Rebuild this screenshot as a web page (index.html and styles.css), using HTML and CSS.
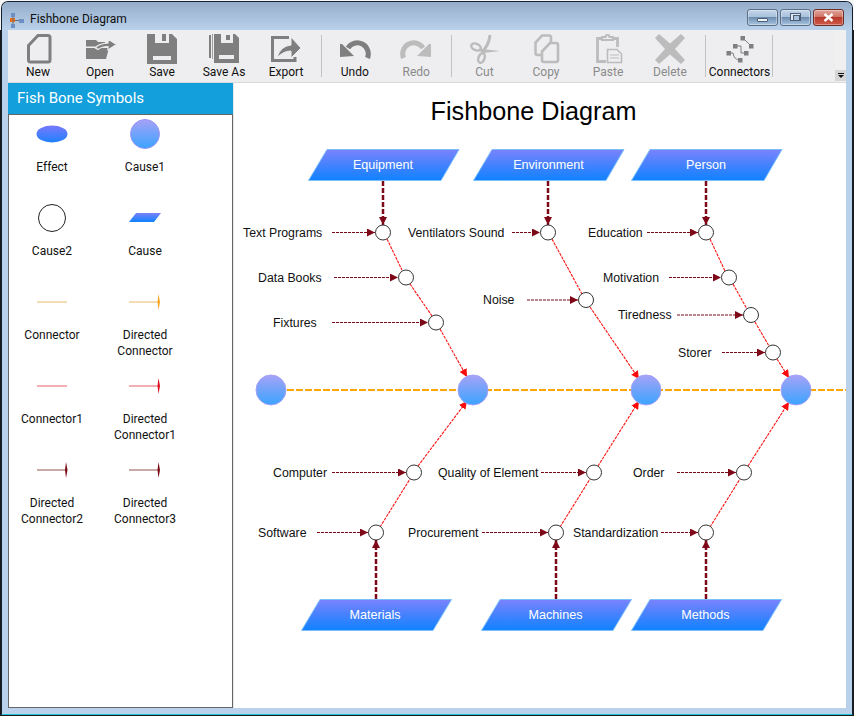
FILE: index.html
```html
<!DOCTYPE html>
<html lang="en">
<head>
<meta charset="utf-8">
<title>Fishbone Diagram</title>
<link rel="stylesheet" href="styles.css">
</head>
<body>
<div class="window">
  <header class="titlebar">
    <svg class="app-icon" viewBox="0 0 15 15" width="15" height="15">
      <rect x="1" y="0" width="4" height="4" fill="#6d8fc4"/>
      <rect x="0" y="5" width="5" height="4" fill="#e8701a"/>
      <rect x="1" y="11" width="4" height="4" fill="#6d8fc4"/>
      <rect x="9" y="6" width="5" height="4" fill="#6d8fc4"/>
      <path d="M3 4V11M5 7.5H9" stroke="#6b6b6b" stroke-width="1" fill="none"/>
    </svg>
    <span class="title">Fishbone Diagram</span>
    <div class="controls">
      <div class="ctl"><span class="min-glyph"></span></div>
      <div class="ctl"><span class="max-glyph"></span></div>
      <div class="ctl close">
        <svg viewBox="0 0 11 9" width="11" height="9"><path d="M1.5 1L9.5 8M9.5 1L1.5 8" stroke="#fff" stroke-width="2.4" fill="none"/></svg>
      </div>
    </div>
  </header>
  <div class="client">
    <nav class="toolbar">
      <div class="tools">
        <div class="tool first">
          <svg class="ic" viewBox="0 0 30 30"><path d="M5.500 11.500L15 1.500H25a2 2 0 0 1 2 2V26a2 2 0 0 1-2 2H7.500a2 2 0 0 1-2-2Z" fill="none" stroke="#7f7f7f" stroke-width="3"/></svg>
          <span>New</span>
        </div>
        <div class="tool">
          <svg class="ic" viewBox="0 0 30 30"><path d="M1 6H11L13 8H20V9.500Q13 10 10.500 12.500H1ZM1 14H24L21 25H1Z" fill="#7f7f7f"/><path d="M10.500 14Q14 9.500 23 9V5L31.500 10.500L23 16V12.500Q17 12.500 13 15.500Z" fill="#7f7f7f" stroke="#eeeef0" stroke-width="1.200"/></svg>
          <span>Open</span>
        </div>
        <div class="tool">
          <svg class="ic" viewBox="0 0 30 30"><path d="M0 0H8V9H22V0H25L30 5V30H0Z" fill="#7f7f7f"/><rect x="15" y="0" width="4" height="7" fill="#7f7f7f"/><rect x="6" y="22" width="18" height="4" fill="#eeeef0"/></svg>
          <span>Save</span>
        </div>
        <div class="tool">
          <svg class="ic" viewBox="0 0 30 30"><path d="M5 0H12V9H24V0H26L30 4V29H5Z" fill="#7f7f7f"/><rect x="17" y="1" width="4" height="5" fill="#7f7f7f"/><rect x="10" y="21" width="15" height="4" fill="#eeeef0"/><rect x="0" y="1" width="2" height="23" fill="#7f7f7f"/><rect x="3" y="0" width="1" height="25" fill="#a0a0a0"/></svg>
          <span>Save As</span>
        </div>
        <div class="tool">
          <svg class="ic" viewBox="0 0 30 30"><path d="M18 3.500H1.500V26.500H24V23" fill="none" stroke="#7f7f7f" stroke-width="3"/><path d="M6 24Q9 12 20 11V3L30 14L20 24V17Q12 17 6 24Z" fill="#7f7f7f" stroke="#eeeef0" stroke-width="1"/></svg>
          <span>Export</span>
        </div>
        <div class="sep"></div>
        <div class="tool step">
          <svg class="ic" viewBox="0 0 30 30"><path d="M27.500 24A11 11 0 0 0 8 14" fill="none" stroke="#7f7f7f" stroke-width="5"/><path d="M0 10H2L14 22L0 23Z" fill="#7f7f7f"/></svg>
          <span>Undo</span>
        </div>
        <div class="tool step off">
          <svg class="ic" viewBox="0 0 30 30"><path d="M2.500 24A11 11 0 0 1 22 14" fill="none" stroke="#bcbcbc" stroke-width="5"/><path d="M30 10H28L16 22L30 23Z" fill="#bcbcbc"/></svg>
          <span>Redo</span>
        </div>
        <div class="sep"></div>
        <div class="tool mid off">
          <svg class="ic" viewBox="0 0 30 30"><path d="M20 1Q19 11 12 18" fill="none" stroke="#bcbcbc" stroke-width="3"/><path d="M12 15L30 17L14 19Z" fill="#bcbcbc"/><ellipse cx="6" cy="13" rx="5" ry="3.200" transform="rotate(25 6 13)" fill="none" stroke="#bcbcbc" stroke-width="2.500"/><ellipse cx="11.500" cy="24" rx="3" ry="5" transform="rotate(20 11.500 24)" fill="none" stroke="#bcbcbc" stroke-width="2.500"/><path d="M10 15L13.500 19" stroke="#bcbcbc" stroke-width="2.500"/></svg>
          <span>Cut</span>
        </div>
        <div class="tool off">
          <svg class="ic" viewBox="0 0 30 30"><path d="M12 21H6.500a2 2 0 0 1-2-2V8.500L11 1.500H18a2 2 0 0 1 2 2V8" fill="none" stroke="#bcbcbc" stroke-width="2.600"/><path d="M11 17.500L19 9H25a2 2 0 0 1 2 2V26a2 2 0 0 1-2 2H13a2 2 0 0 1-2-2Z" fill="none" stroke="#bcbcbc" stroke-width="2.600"/></svg>
          <span>Copy</span>
        </div>
        <div class="tool off">
          <svg class="ic" viewBox="0 0 30 30"><path d="M9 4.500H4.500V27.500H13M20 4.500H24.500V13" fill="none" stroke="#bcbcbc" stroke-width="2.800"/><path d="M9 6V3H12.500a2 2 0 0 1 4 0H20V6Z" fill="none" stroke="#bcbcbc" stroke-width="2"/><path d="M14.500 28.500V15.500H24L28.500 20V28.500Z" fill="none" stroke="#bcbcbc" stroke-width="1.600"/><path d="M17 21H26M17 24H26" stroke="#bcbcbc" stroke-width="1.200"/></svg>
          <span>Paste</span>
        </div>
        <div class="tool off">
          <svg class="ic" viewBox="0 0 30 30"><path d="M4 0L15 9.500L26 0L30 4L20 15L30 26L26 30L15 20.500L4 30L0 26L10 15L0 4Z" fill="#bcbcbc"/></svg>
          <span>Delete</span>
        </div>
        <div class="sep"></div>
        <div class="tool wide">
          <svg class="ic" viewBox="0 0 30 30"><path d="M18 4L26 12M10 12H16V19H21M4 19H8Q9 26 15 26" fill="none" stroke="#7f7f7f" stroke-width="1"/><rect x="15.500" y="2" width="4.500" height="4.500" fill="#7f7f7f"/><rect x="24" y="10" width="4.500" height="4.500" fill="#7f7f7f"/><rect x="8" y="10" width="4.500" height="4.500" fill="#7f7f7f"/><rect x="19" y="17" width="4.500" height="4.500" fill="#7f7f7f"/><rect x="1.500" y="17" width="4.500" height="4.500" fill="#7f7f7f"/><rect x="13" y="24" width="4.500" height="4.500" fill="#7f7f7f"/></svg>
          <span>Connectors</span>
        </div>
        <div class="sep last"></div>
      </div>
      <div class="overflow"><span class="of-bar"></span><span class="of-arrow"></span></div>
    </nav>
    <div class="main">
      <aside class="panel">
        <h2 class="panel-head">Fish Bone Symbols</h2>
        <div class="symbols">
          <div class="sym">
            <div class="sym-ic"><svg viewBox="0 0 32 36" width="32" height="36"><ellipse cx="16" cy="18" rx="15.500" ry="8.500" fill="url(#gBlue)"/></svg></div>
            <div class="sym-lb">Effect</div>
          </div>
          <div class="sym">
            <div class="sym-ic"><svg viewBox="0 0 32 36" width="32" height="36"><circle cx="16" cy="18" r="14.500" fill="url(#gCause)" stroke="#9a96f5" stroke-width="1"/></svg></div>
            <div class="sym-lb">Cause1</div>
          </div>
          <div class="sym">
            <div class="sym-ic"><svg viewBox="0 0 32 36" width="32" height="36"><circle cx="16" cy="18" r="13.500" fill="#fff" stroke="#222" stroke-width="1"/></svg></div>
            <div class="sym-lb">Cause2</div>
          </div>
          <div class="sym">
            <div class="sym-ic"><svg viewBox="0 0 32 36" width="32" height="36"><path d="M7 13H32L25 22H0Z" fill="url(#gPara)"/></svg></div>
            <div class="sym-lb">Cause</div>
          </div>
          <div class="sym">
            <div class="sym-ic"><svg viewBox="0 0 32 36" width="32" height="36"><path d="M1 18H31" stroke="#f3dcb4" stroke-width="2"/></svg></div>
            <div class="sym-lb">Connector</div>
          </div>
          <div class="sym">
            <div class="sym-ic"><svg viewBox="0 0 32 36" width="32" height="36"><path d="M0 18H30" stroke="#f3dcb4" stroke-width="2"/><path d="M29.500 10L31 18L29.500 26L28.500 18Z" fill="#f5a623"/></svg></div>
            <div class="sym-lb">Directed<br>Connector</div>
          </div>
          <div class="sym">
            <div class="sym-ic"><svg viewBox="0 0 32 36" width="32" height="36"><path d="M1 18H31" stroke="#f2b0b4" stroke-width="2"/></svg></div>
            <div class="sym-lb">Connector1</div>
          </div>
          <div class="sym">
            <div class="sym-ic"><svg viewBox="0 0 32 36" width="32" height="36"><path d="M0 18H30" stroke="#f2b0b4" stroke-width="2"/><path d="M29.500 10L31 18L29.500 26L28.500 18Z" fill="#e01020"/></svg></div>
            <div class="sym-lb">Directed<br>Connector1</div>
          </div>
          <div class="sym">
            <div class="sym-ic"><svg viewBox="0 0 32 36" width="32" height="36"><path d="M1 18H30" stroke="#c9a8a8" stroke-width="2"/><path d="M30 10L31.500 18L30 26L29 18Z" fill="#7a0a14"/></svg></div>
            <div class="sym-lb">Directed<br>Connector2</div>
          </div>
          <div class="sym">
            <div class="sym-ic"><svg viewBox="0 0 32 36" width="32" height="36"><path d="M0 18H30" stroke="#c9a8a8" stroke-width="2"/><path d="M29.500 10L31 18L29.500 26L28.500 18Z" fill="#7a0a14"/></svg></div>
            <div class="sym-lb">Directed<br>Connector3</div>
          </div>
        </div>
      </aside>
      <section class="canvas">
        <svg class="diagram" viewBox="234 83 612 625" width="612" height="625">
          <defs>
            <linearGradient id="gBlue" x1="0" y1="0" x2="0" y2="1"><stop offset="0" stop-color="#7a78fb"/><stop offset="1" stop-color="#1f82ff"/></linearGradient>
            <linearGradient id="gPara" x1="0" y1="0" x2="0" y2="1"><stop offset="0" stop-color="#7b82fd"/><stop offset="1" stop-color="#0f82ff"/></linearGradient>
            <linearGradient id="gCause" x1="0" y1="0" x2="0" y2="1"><stop offset="0" stop-color="#a6a2f7"/><stop offset="1" stop-color="#3aa4ff"/></linearGradient>
            <marker id="mDark" viewBox="0 0 8 8" refX="8" refY="4" markerWidth="8" markerHeight="8" markerUnits="userSpaceOnUse" orient="auto"><path d="M0 0L8 4L0 8Z" fill="#7d0818"/></marker>
            <marker id="mRed" viewBox="0 0 8 8" refX="8" refY="4" markerWidth="8" markerHeight="8" markerUnits="userSpaceOnUse" orient="auto"><path d="M0 0L8 4L0 8Z" fill="#fa0a0a"/></marker>
          </defs>
          <text class="d-title" x="533.500" y="120" text-anchor="middle">Fishbone Diagram</text>

          <path class="spine" d="M287 390H846"/>

          <g class="para">
            <path d="M327 149.500H459L441 180.500H308.500Z"/>
            <path d="M492 149.500H624L606 180.500H473.500Z"/>
            <path d="M650 149.500H782L764 180.500H631.500Z"/>
            <path d="M320 599.500H451.500L433 630.500H301.500Z"/>
            <path d="M500 599.500H631.500L613 630.500H481.500Z"/>
            <path d="M650 599.500H781.500L763 630.500H631.500Z"/>
          </g>
          <text class="p-lb" x="383" y="169">Equipment</text>
          <text class="p-lb" x="548.500" y="169">Environment</text>
          <text class="p-lb" x="706" y="169">Person</text>
          <text class="p-lb" x="375" y="619">Materials</text>
          <text class="p-lb" x="555.500" y="619">Machines</text>
          <text class="p-lb" x="705.500" y="619">Methods</text>

          <g class="thick">
            <path d="M383 181V225"/>
            <path d="M548 181V225"/>
            <path d="M706 181V225"/>
            <path d="M376 599V540"/>
            <path d="M556 599V540"/>
            <path d="M706 599V540"/>
          </g>

          <g class="bone">
            <path d="M387 239L402 270"/>
            <path d="M410 284L432 316"/>
            <path d="M440 329L467 377" marker-end="url(#mRed)"/>
            <path d="M552 239L582 294"/>
            <path d="M590 307L639 379" marker-end="url(#mRed)"/>
            <path d="M710 239L725 271"/>
            <path d="M733 284L747 309"/>
            <path d="M755 322L769 346"/>
            <path d="M777 359L789 378" marker-end="url(#mRed)"/>
            <path d="M380 527L410 479"/>
            <path d="M418 466L467 401" marker-end="url(#mRed)"/>
            <path d="M560 527L590 479"/>
            <path d="M598 466L639 401" marker-end="url(#mRed)"/>
            <path d="M710 527L740 479"/>
            <path d="M748 466L789 402" marker-end="url(#mRed)"/>
          </g>

          <g class="sub">
            <path d="M332 232.500H375"/>
            <path d="M334 277.500H398"/>
            <path d="M332 322.500H428"/>
            <path d="M512 232.500H540"/>
            <path d="M527 300H578"/>
            <path d="M647 232.500H698"/>
            <path d="M669 277.500H721"/>
            <path d="M677 315H743"/>
            <path d="M722 352.500H765"/>
            <path d="M332 472.500H406"/>
            <path d="M317 532.500H368"/>
            <path d="M541 472.500H586"/>
            <path d="M482 532.500H548"/>
            <path d="M677 472.500H736"/>
            <path d="M661 532.500H698"/>
          </g>

          <g class="small">
            <circle cx="383" cy="232.500" r="7.500"/>
            <circle cx="406" cy="277.500" r="7.500"/>
            <circle cx="436" cy="322.500" r="7.500"/>
            <circle cx="548" cy="232.500" r="7.500"/>
            <circle cx="586" cy="300" r="7.500"/>
            <circle cx="706" cy="232.500" r="7.500"/>
            <circle cx="729" cy="277.500" r="7.500"/>
            <circle cx="751" cy="315" r="7.500"/>
            <circle cx="773" cy="352.500" r="7.500"/>
            <circle cx="414" cy="472.500" r="7.500"/>
            <circle cx="376" cy="532.500" r="7.500"/>
            <circle cx="594" cy="472.500" r="7.500"/>
            <circle cx="556" cy="532.500" r="7.500"/>
            <circle cx="744" cy="472.500" r="7.500"/>
            <circle cx="706" cy="532.500" r="7.500"/>
          </g>

          <g class="big">
            <circle cx="271" cy="390" r="15"/>
            <circle cx="473" cy="390" r="15"/>
            <circle cx="646" cy="390" r="15"/>
            <circle cx="796" cy="390" r="15"/>
          </g>

          <g class="lb">
            <text x="243" y="237">Text Programs</text>
            <text x="258" y="282">Data Books</text>
            <text x="273" y="327">Fixtures</text>
            <text x="408" y="237">Ventilators Sound</text>
            <text x="483" y="304">Noise</text>
            <text x="588" y="237">Education</text>
            <text x="603" y="282">Motivation</text>
            <text x="618" y="319">Tiredness</text>
            <text x="678" y="357">Storer</text>
            <text x="273" y="477">Computer</text>
            <text x="258" y="537">Software</text>
            <text x="438" y="477">Quality of Element</text>
            <text x="408" y="537">Procurement</text>
            <text x="633" y="477">Order</text>
            <text x="573" y="537">Standardization</text>
          </g>
        </svg>
      </section>
    </div>
  </div>
</div>
</body>
</html>
```

FILE: styles.css
```css
* { box-sizing: border-box; }
html, body { margin: 0; height: 100%; overflow: hidden; }
html { background: linear-gradient(#f4f6f8 0, #f4f6f8 30px, #1a1a1a 30px); }
body { padding: 1px; font-family: Roboto, "Open Sans", sans-serif; }

.window {
  width: 852px;
  height: 714px;
  border: 1px solid #14202c;
  border-bottom-color: #1fc0d8;
  border-radius: 7px 7px 0 0;
  background: #b9d1ea;
  display: flex;
  flex-direction: column;
  overflow: hidden;
}

.titlebar {
  height: 28px;
  flex: none;
  display: flex;
  align-items: center;
  padding: 5px 0 0 8px;
  background: linear-gradient(#95adc9, #b9d1ea);
}
.app-icon { flex: none; margin-top: 4px; }
.title { margin: 0 0 0 5px; font-size: 12px; color: #101010; padding-top: 1px; }
.controls { margin-left: auto; margin-right: 8px; margin-top: -3px; display: flex; gap: 2px; }
.ctl {
  width: 31px;
  height: 17px;
  border: 1px solid #5a6e86;
  border-radius: 3px;
  background: linear-gradient(#c4d5e9 0, #a9c1dc 45%, #6f8db0 50%, #a8c5e0 100%);
  display: flex;
  align-items: center;
  justify-content: center;
  box-shadow: inset 0 0 0 1px rgba(255,255,255,.35);
}
.min-glyph { width: 11px; height: 4px; margin-top: 5px; background: #eef3f8; border: 1px solid #4b5e76; border-radius: 1px; }
.max-glyph { width: 11px; height: 8px; background: #dfe8f2; border: 1px solid #4b5e76; }
.max-glyph::after { content: ""; display: block; width: 5px; height: 4px; margin: 1px 2px; border: 1px solid #4b5e76; background: #a9c1dc; }
.ctl.close {
  background: linear-gradient(#e2a59a 0, #cf7567 45%, #b83a2b 50%, #cf5a4a 100%);
  border-color: #6e2c26;
}

.client { flex: 1; min-height: 0; margin: 0 6px 6px 6px; display: flex; flex-direction: column; background: #fff; }

.toolbar {
  height: 53px;
  flex: none;
  display: flex;
  background: #f0f0f0;
  border-bottom: 1px solid #d9d9d9;
  position: relative;
}
.tools {
  width: 827px;
  height: 52px;
  background: #eeeef0;
  border-radius: 0 6px 0 0;
  display: flex;
  align-items: flex-start;
  padding-top: 4px;
}
.tool {
  width: 62px;
  display: flex;
  flex-direction: column;
  align-items: center;
  font-size: 12px;
  line-height: 16px;
  color: #111;
  flex: none;
}
.tool.first { width: 60px; margin-right: 1px; }
.tool.step { width: 61.5px; }
.tool.mid { width: 61px; }
.tool.off { color: #8a8a8a; }
.tool.wide { width: 65px; margin-left: -1px; }
.ic { width: 30px; height: 30px; display: block; overflow: visible; }
.sep { width: 1px; height: 42px; margin: 1px 2px 0 4px; background: #c2c2c2; flex: none; }
.sep.last { margin-left: 0; }

.overflow {
  position: absolute;
  right: 0;
  bottom: 1px;
  width: 11px;
  height: 11px;
  background: #d6d6d6;
  display: flex;
  flex-direction: column;
  align-items: center;
  padding-top: 3px;
}
.of-bar { width: 6px; height: 1px; background: #111; margin-bottom: 1px; }
.of-arrow { width: 0; height: 0; border: 3px solid transparent; border-top: 3px solid #111; border-bottom: 0; }

.main { flex: 1; min-height: 0; display: flex; }
.panel { width: 225px; flex: none; display: flex; flex-direction: column; }
.panel-head {
  margin: 0;
  height: 31px;
  flex: none;
  background: #129fdc;
  color: #fff;
  font-size: 15px;
  font-weight: 400;
  line-height: 30px;
  padding-left: 9px;
}
.symbols {
  flex: 1;
  border: 1px solid #666;
  background: #fff;
  display: flex;
  flex-wrap: wrap;
  align-content: flex-start;
  column-gap: 7px;
  padding-top: 1px;
}
.sym { width: 86px; height: 84px; display: flex; flex-direction: column; align-items: center; }
.sym-ic { height: 36px; flex: none; }
.sym-ic svg { display: block; overflow: visible; }
.sym-lb { margin-top: 7px; font-size: 12px; line-height: 16px; text-align: center; color: #111; }

.canvas { flex: 1; min-width: 0; background: #fff; border-left: 1px solid #e8e8e8; }
.diagram { display: block; font-family: "Liberation Sans", Arial, sans-serif; }
.d-title { font-size: 25.200px; fill: #000; }
.spine { stroke: #ffa500; stroke-width: 2; stroke-dasharray: 7 2; fill: none; }
.para path { fill: url(#gPara); stroke: #7cc0fb; stroke-width: 1; }
.p-lb { font-size: 12.600px; fill: #fff; text-anchor: middle; }
.thick path { stroke: #7d0818; stroke-width: 2.500; stroke-dasharray: 5 2; fill: none; marker-end: url(#mDark); }
.bone path { stroke: #fa1414; stroke-width: 1.100; stroke-dasharray: 3 1; fill: none; }
.sub path { stroke: #7d0818; stroke-width: 1; stroke-dasharray: 3 1; fill: none; marker-end: url(#mDark); }
.small circle { fill: #fff; stroke: #333; stroke-width: 1; }
.big circle { fill: url(#gCause); stroke: #a6a2f7; stroke-width: 1; }
.lb text { font-size: 12.300px; fill: #111; }
```
